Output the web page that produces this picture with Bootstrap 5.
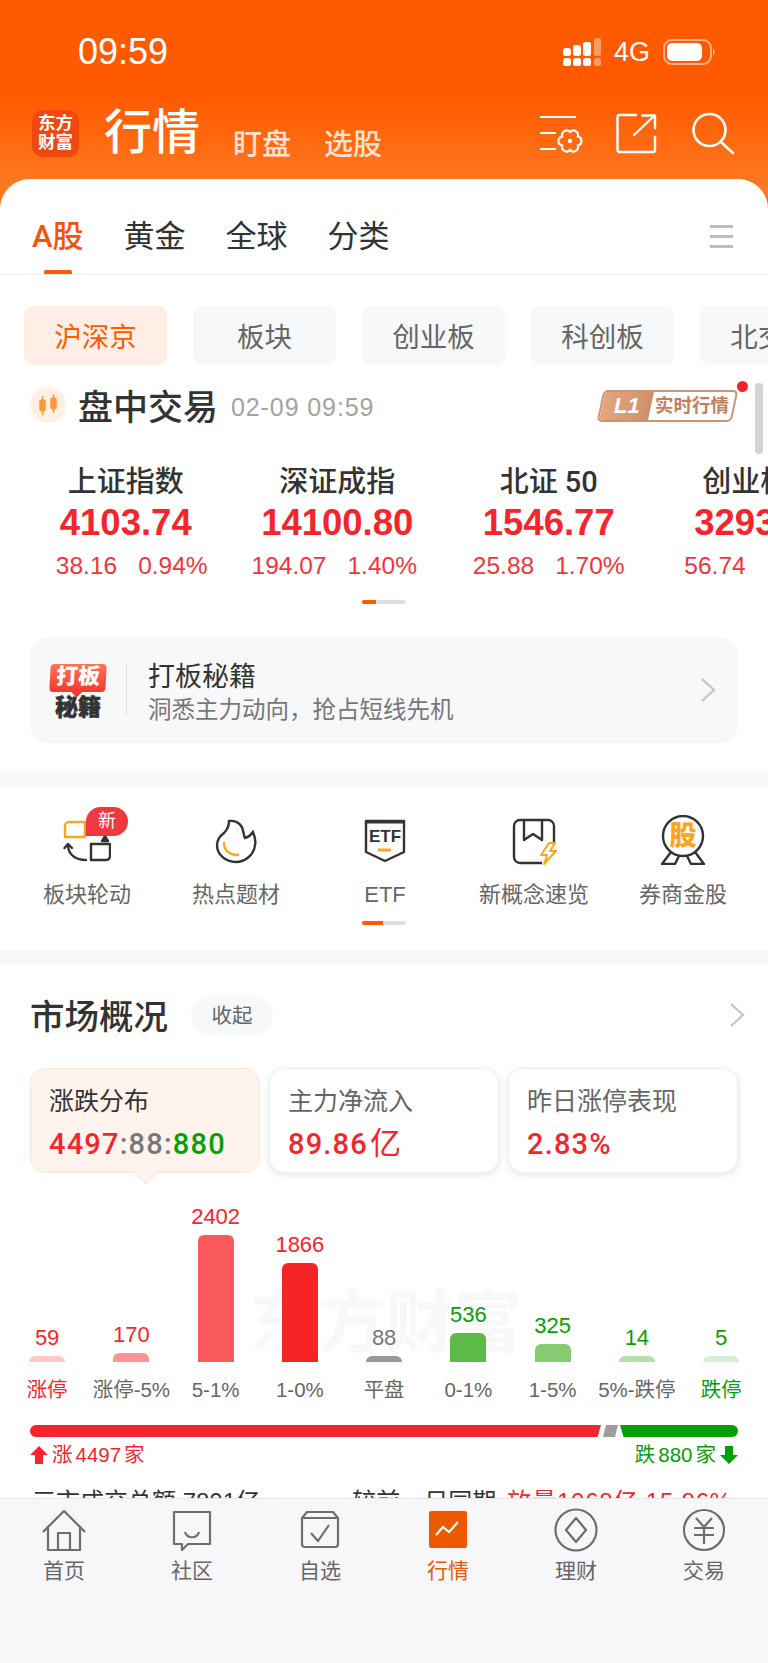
<!DOCTYPE html>
<html lang="zh">
<head>
    <meta charset="utf-8">
    <title>行情</title>
    <link href="https://cdn.jsdelivr.net/npm/bootstrap@5.3.3/dist/css/bootstrap.min.css" rel="stylesheet">
    <style>
        :root { --up: #f6252b; --down: #05a005; --brand: #ff5a00; --soft: #f7f8fa; }
        body { margin: 0; height: 1663px; overflow: hidden; background: #fff; color: #333;
            font-family: "Liberation Sans", "Noto Sans CJK SC", sans-serif; }
        .main-area { height: 1498px; overflow: hidden; }
        .top-head { height: 209px; background: linear-gradient(#ff5a00 0, #ff5a00 95px, #ff7a22 190px); color: #fff; }
        .status-row { padding: 31px 52px 0 78px; height: 72px; }
        .clock { font-size: 36px; line-height: 42px; }
        .net { font-size: 27px; line-height: 42px; margin: 0 13px 0 12px; }
        .title-row { margin-top: 33px; height: 56px; padding: 0 33px 0 32px; }
        .brand-logo { width: 47px; height: 47px; margin-top: 5px; border-radius: 11px; background: #f2470f; font-size: 17.5px; font-weight: 700; line-height: 19px; padding-top: 4px; }
        .page-name { font-size: 48px; line-height: 56px; font-weight: 500; margin-left: 25px; width: 96px; }
        .head-link { font-size: 29px; line-height: 32px; color: #ffe3d2; font-weight: 500; }
        .sheet { margin-top: -30px; background: #fff; border-radius: 30px 30px 0 0; }
        .tab-strip { height: 96px; padding: 36px 34px 0 32px; border-bottom: 1px solid #eee; gap: 40px; }
        .tab-one { font-size: 31px; line-height: 44px; position: relative; color: #333; font-family: Roboto, "Noto Sans CJK SC", sans-serif; }
        .tab-one.on { color: #f4540a; font-weight: 500; }
        .tab-one.on::after { content: ""; position: absolute; left: 12px; top: 55px; width: 28px; height: 4px; background: var(--brand); border-radius: 2px 2px 0 0; }
        .pill-row { margin-top: 31px; padding-left: 24px; gap: 26px; overflow: hidden; }
        .pill-one { width: 143px; height: 59px; padding-top: 2px; line-height: 59px; flex-shrink: 0; text-align: center; border-radius: 9px; background: var(--soft); color: #666; font-size: 27.5px; }
        .pill-one.on { background: #ffeee6; color: var(--brand); }
        .trade-row { margin-top: 14px; height: 52px; padding: 0 30px; position: relative; }
        .candle-dot { width: 36px; height: 36px; margin-right: 12px; }
        .trade-title { font-size: 35px; line-height: 52px; padding-top: 5px; font-weight: 500; }
        .trade-time { font-size: 25px; color: #a3a3a3; margin-left: 13px; letter-spacing: .9px; padding-top: 5px; }
        .l1-tag { position: absolute; left: 600px; top: 11px; width: 135px; height: 32px; display: flex; transform: skewX(-12deg); border: 2px solid #cf9273; border-radius: 5px; overflow: hidden; background: #fff; }
        .l1-left { width: 49px; flex-shrink: 0; background: linear-gradient(90deg, #e2a77e, #cf9068); color: #fff; font-weight: 700; font-size: 22px; line-height: 28px; text-align: center; }
        .l1-right { flex: 1; color: #c27f5e; font-size: 18.5px; line-height: 28px; font-weight: 700; text-align: center; white-space: nowrap; }
        .l1-left span, .l1-right span { display: inline-block; transform: skewX(12deg); }
        .red-dot { position: absolute; left: 737px; top: 2px; width: 11px; height: 11px; border-radius: 50%; background: #f5222d; }
        .side-scroll { position: absolute; left: 755px; top: 4px; width: 8px; height: 71px; border-radius: 4px; background: #d3d3d3; }
        .index-row { margin-top: 33px; padding-left: 20px; overflow: hidden; }
        .index-one { width: 211.5px; flex-shrink: 0; text-align: center; }
        .index-name { font-size: 29px; line-height: 36px; font-weight: 500; font-family: Roboto, "Noto Sans CJK SC", sans-serif; }
        .index-val { font-size: 36.5px; line-height: 44px; margin-top: 1px; font-weight: 700; color: var(--up); }
        .index-chg { font-size: 24.5px; line-height: 30px; margin-top: 6px; color: #f4343a; gap: 21px; white-space: nowrap; }
        .chg-first { padding-left: 12px; }
        .chg-second { padding-right: 6px; }
        .swipe-bar { width: 44px; height: 4px; border-radius: 2px; background: #dcdfe6; margin: 0 auto; overflow: hidden; }
        .swipe-bar i { display: block; height: 4px; background: var(--brand); }
        .tip-card { margin: 33px 30px 0; height: 106px; border-radius: 18px; background: var(--soft); padding: 0 22px 0 20px; }
        .tip-logo { width: 56px; padding-top: 4px; }
        .tip-red { height: 28px; line-height: 26px; background: linear-gradient(#ff7355, #f13a30); color: #fff; font-size: 22px; font-weight: 900; text-align: center; border-radius: 4px; transform: skewX(-3deg); position: relative; }
        .tip-red::after { content: ""; position: absolute; left: 24px; top: 25px; width: 7px; height: 7px; background: #f13a30; transform: rotate(45deg); }
        .tip-black { font-size: 23px; line-height: 28px; font-weight: 900; color: #333; text-align: center; margin-top: 1px; -webkit-text-stroke: .5px #333; }
        .tip-line { width: 1px; height: 52px; background: #e2e2e2; margin: 0 21px 0 20px; }
        .tip-title { font-size: 27px; line-height: 36px; padding-top: 4px; color: #333; }
        .tip-sub { font-size: 23.5px; line-height: 30px; color: #777; }
        .grey-band { height: 15px; background: var(--soft); }
        .entry-row { padding: 28px 0 0 12.5px; }
        .entry-one { width: 149px; text-align: center; flex-shrink: 0; }
        .entry-ico { width: 48px; height: 50px; margin: 0 auto; position: relative; display: block; }
        .new-tag { position: absolute; left: 23px; top: -8px; width: 42px; height: 29px; line-height: 28px; background: #ee3a3f; color: #fff; font-size: 18px; border-radius: 15px 15px 15px 0; }
        .entry-name { font-size: 22px; line-height: 30px; margin-top: 15px; color: #666; }
        .market-head { margin-top: 30px; height: 40px; padding: 0 23px 0 30px; }
        .market-title { font-size: 34.5px; line-height: 40px; padding-top: 4px; font-weight: 500; }
        .fold-pill { width: 82px; height: 39px; line-height: 39px; text-align: center; border-radius: 20px; background: var(--soft); color: #666; font-size: 20.5px; margin-left: 23px; }
        .stat-row { margin: 33px 30px 0; gap: 9px; }
        .stat-one { flex: 1 1 0; height: 105px; padding: 15px 18px 0; border-radius: 15px; background: #fff; border: 1px solid #f0f0f0; box-shadow: 0 2px 7px rgba(0,0,0,.11); position: relative; }
        .stat-one.on { background: #fff3ee; border-color: #ffe4d9; box-shadow: none; }
        .stat-one.on::after { content: ""; position: absolute; left: 107px; bottom: -9px; width: 16px; height: 16px; background: #fff3ee; border: solid #ffe4d9; border-width: 0 1px 1px 0; transform: rotate(45deg); }
        .stat-name { font-size: 25px; line-height: 34px; color: #666; }
        .stat-one.on .stat-name { color: #333; }
        .stat-val { font-size: 29px; line-height: 36px; margin-top: 8px; font-weight: 500; color: var(--up); letter-spacing: 1.2px; white-space: nowrap; font-family: Roboto, "Noto Sans CJK SC", sans-serif; }
        .stat-val .unit { font-size: 31px; font-weight: 400; margin-left: 2px; }
        .chart-box { height: 189px; margin-left: 5px; position: relative; }
        .watermark { position: absolute; left: 245px; top: 112px; font-size: 68px; line-height: 76px; font-weight: 700; color: #f8f8f8; white-space: nowrap; }
        .bar-col { width: 84.25px; position: relative; text-align: center; }
        .bar-num { font-size: 22px; line-height: 26px; margin-bottom: 5px; }
        .bar-body { width: 36px; margin: 0 auto; border-radius: 6px 6px 0 0; }
        .axis-row { margin: 14px 0 0 5px; }
        .axis-one { width: 84.25px; font-size: 20.5px; line-height: 28px; text-align: center; color: #666; white-space: nowrap; }
        .t-up { color: var(--up); }
        .t-down { color: var(--down); }
        .t-flat { color: #777; }
        .split-bar { margin: 21px 30px 0; height: 12px; }
        .split-red { width: 571px; background: var(--up); border-radius: 6px 0 0 6px; clip-path: polygon(0 0, 100% 0, 99.4% 100%, 0 100%); }
        .split-grey { width: 15px; margin-left: 2px; background: #9d9d9d; clip-path: polygon(20% 0, 100% 0, 80% 100%, 0 100%); }
        .split-green { flex: 1; margin-left: 2px; background: var(--down); border-radius: 0 6px 6px 0; clip-path: polygon(0 0, 100% 0, 100% 100%, 3% 100%); }
        .split-text { margin: 4px 30px 0; font-size: 20.5px; line-height: 28px; }
        .split-text b { font-weight: 400; margin: 0 3px; }
        .total-row { margin: 17px 36px 0 32px; font-size: 24px; line-height: 32px; color: #333; white-space: nowrap; }
        .total-red { letter-spacing: .8px; margin-left: 11px; }
        .bottom-tabs { height: 165px; background: #f7f7fa; border-top: 1px solid #e6e6ec; padding-top: 9px; }
        .bt-one { width: 128px; text-align: center; }
        .bt-one svg { display: block; margin: 0 auto; }
        .bt-name { font-size: 21px; line-height: 28px; margin-top: 5px; color: #666; }
        .bt-one.on .bt-name { color: #ec5a00; }
    </style>
</head>
<body>
    <div class="main-area">
        <!-- orange header -->
        <header class="top-head">
            <div class="status-row d-flex align-items-center">
                <span class="clock">09:59</span>
                <svg class="ms-auto" width="40" height="28" viewBox="0 0 40 28" fill="#fff">
                    <rect x="1" y="10" width="8" height="8" rx="2.5"/><rect x="1" y="20" width="8" height="8" rx="2.5"/>
                    <rect x="11" y="7" width="8" height="11" rx="2.5"/><rect x="11" y="20" width="8" height="8" rx="2.5"/>
                    <rect x="21" y="4" width="8" height="14" rx="2.5"/><rect x="21" y="20" width="8" height="8" rx="2.5"/>
                    <g opacity=".4"><rect x="32" y="0" width="7" height="18" rx="2.5"/><rect x="32" y="20" width="7" height="8" rx="2.5"/></g>
                </svg>
                <span class="net">4G</span>
                <svg width="53" height="26" viewBox="0 0 53 26" fill="#fff">
                    <rect x="1" y="1" width="47" height="24" rx="8" fill="none" stroke="#fff" stroke-opacity=".55" stroke-width="2"/>
                    <rect x="4" y="4" width="35" height="18" rx="5"/>
                    <path d="M50 9.5c2 1 2 6 0 7z" opacity=".6"/>
                </svg>
            </div>
            <div class="title-row d-flex align-items-end">
                <div class="brand-logo text-center align-self-start flex-shrink-0">东方<br>财富</div>
                <div class="page-name">行情</div>
                <div class="head-link" style="margin-left:33px">盯盘</div>
                <div class="head-link" style="margin-left:33px">选股</div>
                <div class="ms-auto d-flex align-items-center align-self-center gap-0">
                    <svg width="46" height="40" viewBox="0 0 46 40" fill="none" stroke="#fff" stroke-width="2.2">
                        <path d="M1 4H37M1 20H17M1 36H17"/>
                        <g transform="translate(31 28)"><path d="M7.8-4.5A4.6 4.6 0 0 1 7.8 4.5 4.6 4.6 0 0 1 0 9 4.6 4.6 0 0 1-7.8 4.5 4.6 4.6 0 0 1-7.8-4.5 4.6 4.6 0 0 1 0-9 4.6 4.6 0 0 1 7.8-4.5Z"/><circle r="2.2" fill="#fff" stroke="none"/></g>
                    </svg>
                    <svg style="margin-left:31px" width="41" height="41" viewBox="0 0 41 41" fill="none" stroke="#fff" stroke-width="2.4" stroke-linecap="round" stroke-linejoin="round">
                        <path d="M20 2H3A2 2 0 0 0 1.500 4V37A2 2 0 0 0 3 39H37A2 2 0 0 0 39 37V24"/>
                        <path d="M18 22 38 3M26 2.500H39V15"/>
                    </svg>
                    <svg style="margin-left:35px" width="43" height="43" viewBox="0 0 43 43" fill="none" stroke="#fff" stroke-width="2.6" stroke-linecap="round">
                        <circle cx="17.500" cy="18" r="16"/><path d="M30 31 41 41"/>
                    </svg>
                </div>
            </div>
        </header>

        <div class="sheet">
            <!-- market tabs -->
            <nav class="tab-strip d-flex">
                <span class="tab-one on">A股</span>
                <span class="tab-one">黄金</span>
                <span class="tab-one">全球</span>
                <span class="tab-one">分类</span>
                <svg class="ms-auto" style="margin-top:9px" width="25" height="25" viewBox="0 0 25 25" fill="#bdbdbd">
                    <rect x="1" y="1" width="23" height="3"/><rect x="1" y="11" width="23" height="3"/><rect x="1" y="21" width="23" height="3"/>
                </svg>
            </nav>

            <div class="pill-row d-flex">
                <div class="pill-one on">沪深京</div>
                <div class="pill-one">板块</div>
                <div class="pill-one">创业板</div>
                <div class="pill-one">科创板</div>
                <div class="pill-one">北交所</div>
            </div>

            <div class="trade-row d-flex align-items-center">
                <svg class="candle-dot flex-shrink-0" viewBox="0 0 36 36">
                    <circle cx="18" cy="18" r="18" fill="#fff0e6"/>
                    <g fill="#ff9a3c" stroke="#ff9a3c" stroke-width="1.500"><rect x="10" y="13" width="5" height="11" rx="2"/><path d="M12.500 9V28"/><rect x="21" y="11" width="5" height="11" rx="2"/><path d="M23.500 7V26"/></g>
                </svg>
                <span class="trade-title">盘中交易</span>
                <span class="trade-time">02-09 09:59</span>
                <div class="l1-tag">
                    <div class="l1-left"><span><em>L1</em></span></div>
                    <div class="l1-right"><span>实时行情</span></div>
                </div>
                <div class="red-dot"></div>
                <div class="side-scroll"></div>
            </div>

            <!-- main indexes -->
            <div class="index-row d-flex">
                <div class="index-one">
                    <div class="index-name">上证指数</div>
                    <div class="index-val">4103.74</div>
                    <div class="index-chg chg-first d-flex justify-content-center"><span>38.16</span><span>0.94%</span></div>
                </div>
                <div class="index-one">
                    <div class="index-name">深证成指</div>
                    <div class="index-val">14100.80</div>
                    <div class="index-chg chg-second d-flex justify-content-center"><span>194.07</span><span>1.40%</span></div>
                </div>
                <div class="index-one">
                    <div class="index-name">北证 50</div>
                    <div class="index-val">1546.77</div>
                    <div class="index-chg d-flex justify-content-center"><span>25.88</span><span>1.70%</span></div>
                </div>
                <div class="index-one">
                    <div class="index-name">创业板指</div>
                    <div class="index-val">3293.10</div>
                    <div class="index-chg d-flex justify-content-center"><span>56.74</span><span>1.75%</span></div>
                </div>
            </div>
            <div class="swipe-bar" style="margin-top:19px"><i style="width:14px"></i></div>

            <div class="tip-card d-flex align-items-center">
                <div class="tip-logo flex-shrink-0">
                    <div class="tip-red">打板</div>
                    <div class="tip-black">秘籍</div>
                </div>
                <div class="tip-line flex-shrink-0"></div>
                <div>
                    <div class="tip-title">打板秘籍</div>
                    <div class="tip-sub">洞悉主力动向，抢占短线先机</div>
                </div>
                <svg class="ms-auto" width="16" height="24" viewBox="0 0 16 24" fill="none" stroke="#c4c4c4" stroke-width="2.200"><path d="M2 1 14 12 2 23"/></svg>
            </div>

            <div class="grey-band" style="margin-top:29px"></div>

            <!-- shortcut entries -->
            <div class="entry-row d-flex">
                <div class="entry-one">
                    <div class="entry-ico">
                        <svg width="48" height="50" viewBox="0 0 48 50" fill="none" stroke="#333" stroke-width="2.400" stroke-linejoin="round" stroke-linecap="round">
                            <path d="M6 7H22V22H2V11A4 4 0 0 1 6 7Z" stroke="#ffa41c"/>
                            <path d="M42 21 45 26H39Z" fill="#333"/>
                            <path d="M5 29 1.500 33M5 29 9 33M5 30C5 39 12 45 23 45"/>
                            <path d="M28 29H47V41A4 4 0 0 1 43 45H28Z"/>
                        </svg>
                        <span class="new-tag">新</span>
                    </div>
                    <div class="entry-name">板块轮动</div>
                </div>
                <div class="entry-one">
                    <svg class="entry-ico" viewBox="0 0 48 50" fill="none" stroke="#333" stroke-width="2.400" stroke-linecap="round">
                        <path d="M17 6C24 5 30 9 31 16C32 19 32 21 33 23C36 22 39 20 41 17C43 22 44 26 43 30C42 40 33 47 24 47C13 47 5 39 5 30C5 24 8 21 12 18C15 15 17 11 17 6Z"/>
                        <path d="M12 28C12 35 17 40 26 40" stroke="#ffa41c"/>
                    </svg>
                    <div class="entry-name">热点题材</div>
                </div>
                <div class="entry-one">
                    <svg class="entry-ico" viewBox="0 0 48 50" fill="none" stroke="#333" stroke-width="2.400" stroke-linejoin="round">
                        <path d="M5 6H43V37L24 46 5 37Z"/>
                        <path d="M5 7H43" stroke-width="3"/>
                        <text x="24" y="27" text-anchor="middle" fill="#333" stroke="none" font-size="17" font-weight="700" font-family="Liberation Sans">ETF</text>
                        <path d="M17 35H30" stroke="#ffa41c" stroke-width="3"/>
                    </svg>
                    <div class="entry-name">ETF</div>
                </div>
                <div class="entry-one">
                    <svg class="entry-ico" viewBox="0 0 48 50" fill="none" stroke="#333" stroke-width="2.400" stroke-linejoin="round">
                        <path d="M32 48H10A6 6 0 0 1 4 42V11A6 6 0 0 1 10 5H38A6 6 0 0 1 44 11V30"/>
                        <path d="M14 5V25L23 19 32 25V5"/>
                        <path d="M39 28 31 40H37L34 49 46 36H40L45 28Z" stroke="#ffa41c" stroke-width="2"/>
                    </svg>
                    <div class="entry-name">新概念速览</div>
                </div>
                <div class="entry-one">
                    <svg class="entry-ico" viewBox="0 0 48 50" fill="none" stroke="#333" stroke-width="2.400" stroke-linejoin="round">
                        <circle cx="24" cy="21" r="20"/>
                        <path d="M12 37 3 49H16L20 41M36 37 45 49H32L28 41"/>
                        <text x="24" y="30" text-anchor="middle" fill="#ffa41c" stroke="none" font-size="27" font-weight="900" font-family="Noto Sans CJK SC">股</text>
                    </svg>
                    <div class="entry-name">券商金股</div>
                </div>
            </div>
            <div class="swipe-bar" style="margin-top:11px"><i style="width:21px"></i></div>

            <div class="grey-band" style="margin-top:25px"></div>

            <!-- market overview -->
            <div class="market-head d-flex align-items-center">
                <span class="market-title">市场概况</span>
                <span class="fold-pill">收起</span>
                <svg class="ms-auto" width="16" height="24" viewBox="0 0 16 24" fill="none" stroke="#c4c4c4" stroke-width="2.200"><path d="M2 1 14 12 2 23"/></svg>
            </div>

            <div class="stat-row d-flex">
                <div class="stat-one on">
                    <div class="stat-name">涨跌分布</div>
                    <div class="stat-val">4497<span class="t-flat">:88:</span><span class="t-down">880</span></div>
                </div>
                <div class="stat-one">
                    <div class="stat-name">主力净流入</div>
                    <div class="stat-val">89.86<span class="unit">亿</span></div>
                </div>
                <div class="stat-one">
                    <div class="stat-name">昨日涨停表现</div>
                    <div class="stat-val">2.83%</div>
                </div>
            </div>

            <div class="chart-box d-flex align-items-end">
                <div class="watermark">东方财富</div>
                <div class="bar-col"><div class="bar-num t-up">59</div><div class="bar-body" style="height:6px;background:#ffc8c8"></div></div>
                <div class="bar-col"><div class="bar-num t-up">170</div><div class="bar-body" style="height:9px;background:#ff9496"></div></div>
                <div class="bar-col"><div class="bar-num t-up">2402</div><div class="bar-body" style="height:127px;background:#fa5a5e"></div></div>
                <div class="bar-col"><div class="bar-num t-up">1866</div><div class="bar-body" style="height:99px;background:#f52525"></div></div>
                <div class="bar-col"><div class="bar-num t-flat">88</div><div class="bar-body" style="height:6px;background:#999"></div></div>
                <div class="bar-col"><div class="bar-num t-down">536</div><div class="bar-body" style="height:29px;background:#5cba46"></div></div>
                <div class="bar-col"><div class="bar-num t-down">325</div><div class="bar-body" style="height:18px;background:#84cb72"></div></div>
                <div class="bar-col"><div class="bar-num t-down">14</div><div class="bar-body" style="height:6px;background:#b3e0a8"></div></div>
                <div class="bar-col"><div class="bar-num t-down">5</div><div class="bar-body" style="height:6px;background:#d8f0d2"></div></div>
            </div>
            <div class="axis-row d-flex">
                <div class="axis-one t-up">涨停</div>
                <div class="axis-one">涨停-5%</div>
                <div class="axis-one">5-1%</div>
                <div class="axis-one">1-0%</div>
                <div class="axis-one">平盘</div>
                <div class="axis-one">0-1%</div>
                <div class="axis-one">1-5%</div>
                <div class="axis-one">5%-跌停</div>
                <div class="axis-one t-down">跌停</div>
            </div>

            <div class="split-bar d-flex">
                <div class="split-red"></div>
                <div class="split-grey"></div>
                <div class="split-green"></div>
            </div>
            <div class="split-text d-flex justify-content-between">
                <div class="t-up d-flex align-items-center">
                    <svg class="me-1" width="18" height="18" viewBox="0 0 18 18" fill="#f6252b"><path d="M9 0 18 9H13V18H5V9H0Z"/></svg>
                    <span>涨<b>4497</b>家</span>
                </div>
                <div class="t-down d-flex align-items-center">
                    <span>跌<b>880</b>家</span>
                    <svg class="ms-1" width="18" height="18" viewBox="0 0 18 18" fill="#05a005"><path d="M9 18 18 9H13V0H5V9H0Z"/></svg>
                </div>
            </div>

            <div class="total-row d-flex justify-content-between">
                <span>三市成交总额 7801亿</span>
                <span>较前一日同期<span class="t-up total-red">放量1068亿 15.86%</span></span>
            </div>
        </div>
    </div>

    <!-- bottom tab bar -->
    <footer class="bottom-tabs d-flex">
        <div class="bt-one">
            <svg width="46" height="44" viewBox="0 0 46 44" fill="none" stroke="#6e6e6e" stroke-width="2.200" stroke-linejoin="round">
                <path d="M2 24 23 3 44 24"/><path d="M7 18V42H39V18"/><path d="M17 42V25H29V42"/>
            </svg>
            <div class="bt-name">首页</div>
        </div>
        <div class="bt-one">
            <svg width="44" height="44" viewBox="0 0 44 44" fill="none" stroke="#6e6e6e" stroke-width="2.200" stroke-linejoin="round">
                <path d="M4 4H40V36H18L12 42V36H4Z"/><path d="M15 24C17 31 27 31 29 24"/>
            </svg>
            <div class="bt-name">社区</div>
        </div>
        <div class="bt-one">
            <svg width="44" height="44" viewBox="0 0 44 44" fill="none" stroke="#6e6e6e" stroke-width="2.200" stroke-linejoin="round">
                <path d="M4 10 9 4H35L40 10V36A3 3 0 0 1 37 39H7A3 3 0 0 1 4 36ZM4 10H40"/><path d="M13 25 20 33 31 17"/>
            </svg>
            <div class="bt-name">自选</div>
        </div>
        <div class="bt-one on">
            <svg width="44" height="44" viewBox="0 0 44 44" fill="none">
                <rect x="3" y="3" width="38" height="37" rx="2" fill="#ec5a00"/>
                <path d="M10 27 17 19 23 24 32 14" stroke="#fff" stroke-width="2"/>
            </svg>
            <div class="bt-name">行情</div>
        </div>
        <div class="bt-one">
            <svg width="44" height="44" viewBox="0 0 44 44" fill="none" stroke="#6e6e6e" stroke-width="2.200" stroke-linejoin="round">
                <circle cx="22" cy="22" r="20.500"/><path d="M22 10 32 22 22 34 12 22Z"/>
            </svg>
            <div class="bt-name">理财</div>
        </div>
        <div class="bt-one">
            <svg width="44" height="44" viewBox="0 0 44 44" fill="none" stroke="#6e6e6e" stroke-width="2.200">
                <circle cx="22" cy="22" r="20"/><path d="M14 10 22 19 30 10M12 20H32M12 27H32M22 19V36"/>
            </svg>
            <div class="bt-name">交易</div>
        </div>
    </footer>

    <script src="https://cdn.jsdelivr.net/npm/bootstrap@5.3.3/dist/js/bootstrap.bundle.min.js"></script>
</body>
</html>
